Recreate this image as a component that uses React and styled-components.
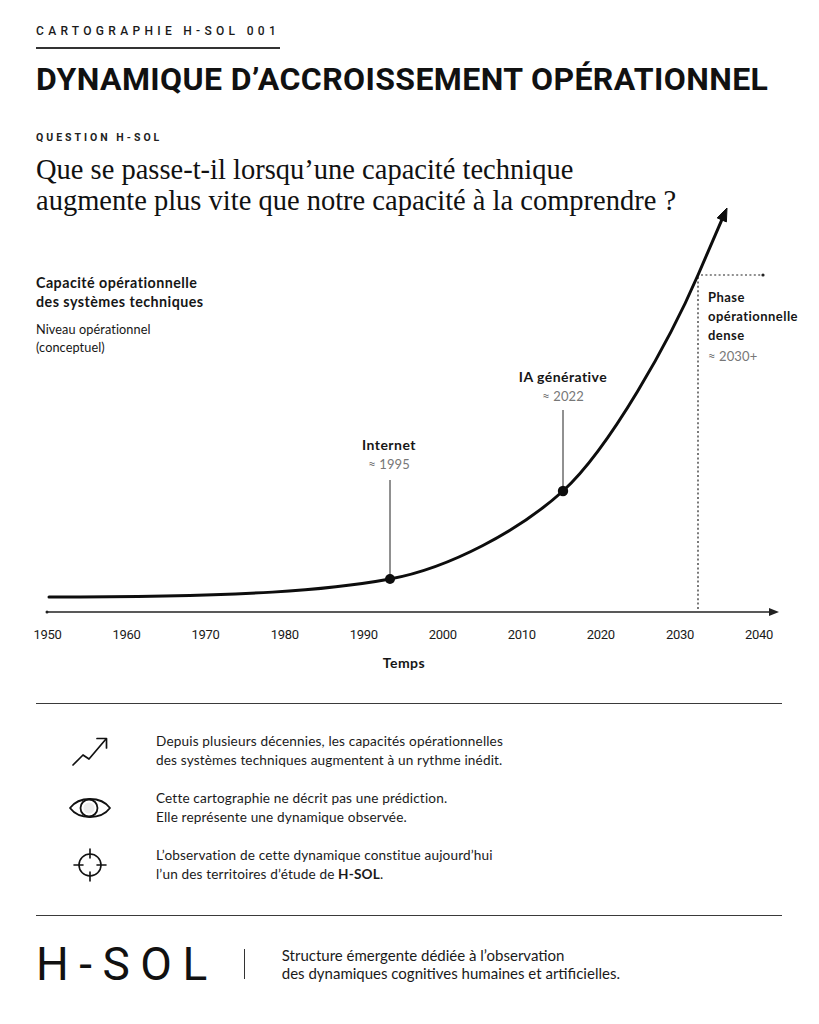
import React from 'react';
import styled, { createGlobalStyle } from 'styled-components';

const GlobalStyle = createGlobalStyle`
  html, body {
    margin: 0;
    padding: 0;
    background: #fff;
  }
  body {
    font-family: Lato, "Noto Sans", sans-serif;
    color: #111;
  }
`;

const Page = styled.div`
  width: 819px;
  box-sizing: border-box;
  padding: 23px 37px 40px 36px;
  display: flex;
  flex-direction: column;
  align-items: flex-start;
`;

const Kicker = styled.div`
  font-family: Roboto, "Liberation Sans", sans-serif;
  font-weight: 500;
  font-size: 12px;
  line-height: 16px;
  letter-spacing: 4.3px;
  color: #1a1a1a;
  padding-bottom: 8px;
  border-bottom: 2px solid #333;
`;

const Title = styled.h1`
  margin: 11px 0 0;
  font-family: Roboto, "Liberation Sans", sans-serif;
  font-weight: 700;
  font-size: 32px;
  line-height: 38px;
  letter-spacing: 0.4px;
  color: #111;
`;

const Eyebrow = styled.div`
  margin-top: 33px;
  font-family: Roboto, "Liberation Sans", sans-serif;
  font-weight: 700;
  font-size: 10.5px;
  line-height: 14px;
  letter-spacing: 3px;
  color: #222;
`;

const Question = styled.p`
  margin: 9px 0 0;
  font-family: "Liberation Serif", "Times New Roman", serif;
  font-size: 28.5px;
  line-height: 31px;
  color: #111;
`;

const ChartSvg = styled.svg`
  display: block;
  overflow: visible;
`;

const Label = styled.text`
  font-family: Lato, "Noto Sans", sans-serif;
  font-size: ${(p) => p.$size || 14}px;
  font-weight: ${(p) => (p.$bold ? 700 : 400)};
  letter-spacing: ${(p) => (p.$bold ? 0.45 : 0.1)}px;
  fill: ${(p) => (p.$muted ? '#777' : '#161616')};
`;

const Year = styled.text`
  font-family: Roboto, "Liberation Sans", sans-serif;
  font-size: 13px;
  letter-spacing: -0.3px;
  fill: #1a1a1a;
`;

const Rule = styled.hr`
  align-self: stretch;
  margin: ${(p) => p.$top}px 0 0;
  border: none;
  border-top: 1.5px solid #3a3a3a;
`;

const Notes = styled.ul`
  list-style: none;
  margin: 28px 0 0;
  padding: 0;
  display: flex;
  flex-direction: column;
  gap: 20px;
`;

const Note = styled.li`
  display: flex;
  align-items: center;
`;

const IconCell = styled.div`
  width: 108px;
  padding-right: 12px;
  display: flex;
  justify-content: center;
  align-items: center;
`;

const NoteText = styled.p`
  margin: 0;
  font-size: 13.6px;
  line-height: 18.5px;
  color: #1a1a1a;
  letter-spacing: 0.15px;
`;

const Strong = styled.span`
  font-weight: 700;
`;

const Footer = styled.footer`
  margin-top: 25px;
  display: flex;
  align-items: center;
`;

const Logo = styled.div`
  font-family: Roboto, "Liberation Sans", sans-serif;
  font-weight: 400;
  font-size: 46px;
  line-height: 46px;
  letter-spacing: 10.5px;
  color: #111;
`;

const Divider = styled.span`
  width: 1px;
  height: 30px;
  background: #333;
  margin: 0 37px 0 26px;
`;

const Tagline = styled.p`
  margin: 0;
  font-size: 15px;
  line-height: 18.5px;
  color: #1a1a1a;
`;

const years = [1950, 1960, 1970, 1980, 1990, 2000, 2010, 2020, 2030, 2040];

function Chart() {
  return (
    <ChartSvg width="746" height="464" viewBox="36 216 746 464">
      {/* y axis legend */}
      <Label x="36" y="288" $bold $size={14.3}>Capacité opérationnelle</Label>
      <Label x="36" y="307" $bold $size={14.3}>des systèmes techniques</Label>
      <Label x="36" y="334" $size={12.7}>Niveau opérationnel</Label>
      <Label x="36" y="352" $size={12.7}>(conceptuel)</Label>

      {/* phase dense */}
      <line x1="698" y1="277" x2="698" y2="611" stroke="#222" strokeWidth="1.2" strokeDasharray="2 2.4" />
      <line x1="701" y1="275" x2="761" y2="275" stroke="#222" strokeWidth="1.2" strokeDasharray="2 2.4" />
      <circle cx="763" cy="275" r="1.6" fill="#222" />
      <Label x="708" y="302" $bold $size={13}>Phase</Label>
      <Label x="708" y="321" $bold $size={13}>opérationnelle</Label>
      <Label x="708" y="340" $bold $size={13}>dense</Label>
      <Label x="708" y="361" $muted $size={13}>≈ 2030+</Label>

      {/* markers */}
      <Label x="389" y="450" textAnchor="middle" $bold>Internet</Label>
      <Label x="389" y="469" textAnchor="middle" $muted $size={13}>≈ 1995</Label>
      <line x1="390" y1="480" x2="390" y2="579" stroke="#222" strokeWidth="1" />

      <Label x="563" y="382" textAnchor="middle" $bold>IA générative</Label>
      <Label x="563" y="401" textAnchor="middle" $muted $size={13}>≈ 2022</Label>
      <line x1="563" y1="410" x2="563" y2="491" stroke="#222" strokeWidth="1" />

      {/* curve */}
      <path
        d="M49 597 C 250 597, 330 590, 390 579 C 450 568, 520 530, 563 491 C 610 448, 670 340, 698 275 L 721.8 219.9"
        fill="none"
        stroke="#0d0d0d"
        strokeWidth="3"
        strokeLinecap="round"
      />
      <polygon points="727,208 726.4,221.9 717.2,217.9" fill="#0d0d0d" stroke="#0d0d0d" strokeWidth="1" strokeLinejoin="round" />
      <circle cx="390" cy="579" r="5" fill="#0d0d0d" />
      <circle cx="563" cy="491" r="5.2" fill="#0d0d0d" />

      {/* x axis */}
      <circle cx="47" cy="612" r="1.5" fill="#222" />
      <line x1="47" y1="612" x2="771" y2="612" stroke="#222" strokeWidth="1.6" />
      <polygon points="779,612 769,608 769,616" fill="#222" />
      {years.map((y, i) => (
        <Year key={y} x={47.5 + i * 79.05} y="639" textAnchor="middle">{y}</Year>
      ))}
      <Label x="404" y="668" textAnchor="middle" $bold $size={14}>Temps</Label>
    </ChartSvg>
  );
}

function TrendIcon() {
  return (
    <svg width="38" height="32" viewBox="0 0 38 32" fill="none" stroke="#111" strokeWidth="1.7" strokeLinecap="round" strokeLinejoin="round">
      <path d="M2 30 L12 20 L18 24 L35 4" />
      <path d="M26 3.5 H35.5 V13" />
    </svg>
  );
}

function EyeIcon() {
  return (
    <svg width="44" height="26" viewBox="0 0 44 26" fill="none" stroke="#111" strokeWidth="1.8">
      <path d="M2 13 C 11 1, 33 1, 42 13 C 33 25, 11 25, 2 13 Z" strokeLinejoin="round" />
      <circle cx="21" cy="13" r="8.5" fill="#fff" />
      <circle cx="21" cy="13" r="5.5" fill="#ececec" stroke="none" />
    </svg>
  );
}

function CrosshairIcon() {
  return (
    <svg width="34" height="34" viewBox="0 0 34 34" fill="none" stroke="#111" strokeWidth="1.6" strokeLinecap="round">
      <circle cx="17" cy="17" r="11" />
      <path d="M17 1 V10 M17 24 V33 M1 17 H10 M24 17 H33" />
    </svg>
  );
}

const notes = [
  {
    icon: <TrendIcon />,
    lines: [
      'Depuis plusieurs décennies, les capacités opérationnelles',
      'des systèmes techniques augmentent à un rythme inédit.',
    ],
  },
  {
    icon: <EyeIcon />,
    lines: ['Cette cartographie ne décrit pas une prédiction.', 'Elle représente une dynamique observée.'],
  },
  {
    icon: <CrosshairIcon />,
    lines: [
      'L’observation de cette dynamique constitue aujourd’hui',
      <>
        l’un des territoires d’étude de <Strong>H-SOL</Strong>.
      </>,
    ],
  },
];

export default function App() {
  return (
    <>
      <GlobalStyle />
      <Page>
        <Kicker>CARTOGRAPHIE H-SOL 001</Kicker>
        <Title>DYNAMIQUE D’ACCROISSEMENT OPÉRATIONNEL</Title>
        <Eyebrow>QUESTION H-SOL</Eyebrow>
        <Question>
          Que se passe-t-il lorsqu’une capacité technique
          <br />
          augmente plus vite que notre capacité à la comprendre ?
        </Question>
        <Chart />
        <Rule $top={23} />
        <Notes>
          {notes.map((n, i) => (
            <Note key={i}>
              <IconCell>{n.icon}</IconCell>
              <NoteText>
                {n.lines[0]}
                <br />
                {n.lines[1]}
              </NoteText>
            </Note>
          ))}
        </Notes>
        <Rule $top={32} />
        <Footer>
          <Logo>H-SOL</Logo>
          <Divider />
          <Tagline>
            Structure émergente dédiée à l’observation
            <br />
            des dynamiques cognitives humaines et artificielles.
          </Tagline>
        </Footer>
      </Page>
    </>
  );
}
